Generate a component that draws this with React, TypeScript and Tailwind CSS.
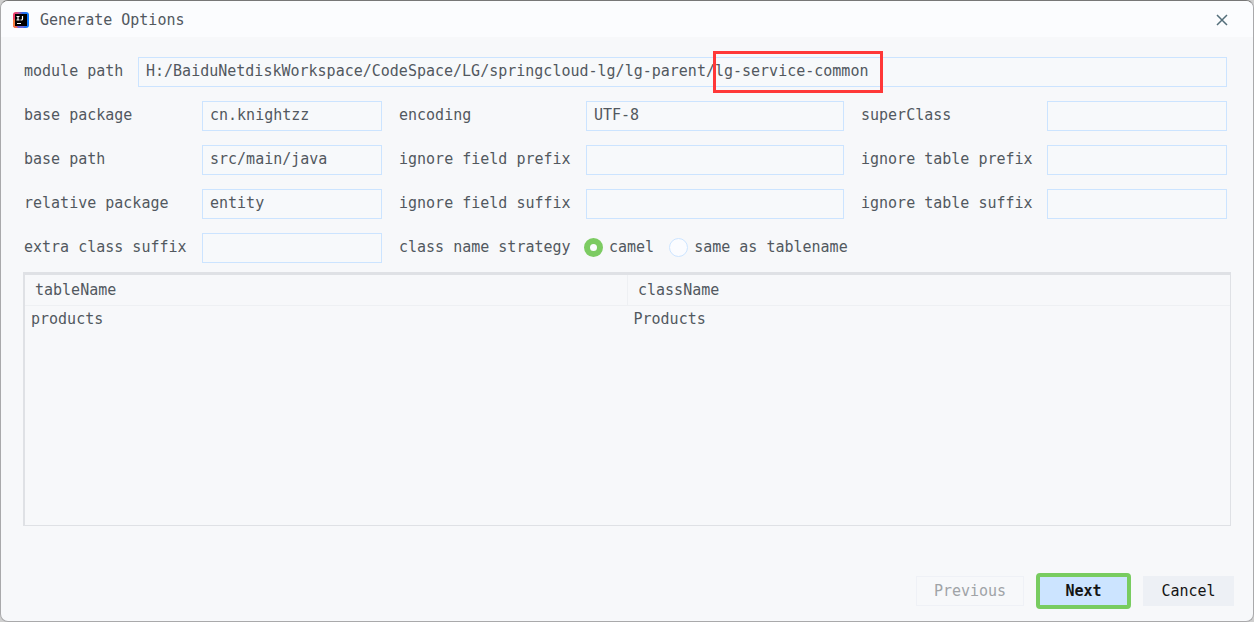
import { useState } from 'react';

const LABEL = 'flex items-center whitespace-nowrap pb-0.5';
const FIELD = 'h-[30px] w-full min-w-0 border border-[#cce4ff] bg-[#f7f9fb] px-[7px] pb-0.5 outline-none';

interface FieldProps {
  id: string;
  label: string;
  value?: string;
  first?: boolean;
}

function Field({ id, label, value = '', first = false }: FieldProps) {
  return (
    <>
      <label htmlFor={id} className={`${LABEL} ${first ? 'pl-px' : 'pl-[17px]'}`}>
        {label}
      </label>
      <input id={id} type="text" defaultValue={value} className={FIELD} />
    </>
  );
}

function IdeaLogo() {
  return (
    <svg className="size-4" viewBox="0 0 16 16" aria-hidden="true">
      <defs>
        <linearGradient id="idea" x1="0" y1="0.5" x2="1" y2="0.5">
          <stop offset="0" stopColor="#f8355a" />
          <stop offset="0.3" stopColor="#d0508c" />
          <stop offset="0.6" stopColor="#2f6bea" />
          <stop offset="1" stopColor="#0a7cff" />
        </linearGradient>
      </defs>
      <rect width="16" height="16" rx="3" fill="url(#idea)" />
      <path d="M0 8 L2 7 V14 L5 16 H3 Q0 16 0 13 Z" fill="#f57a3c" />
      <path d="M4 14 H12 L10 16 H5 Z" fill="#6a66d8" />
      <rect x="2" y="2" width="12" height="12" fill="#000" />
      <path
        d="M3.5 4.5 H6.5 M5 4.5 V8 M3.5 8 H6.5 M9.5 4 V7 Q9.5 8 8.5 8 H7.5"
        stroke="#fff"
        strokeWidth="1.2"
        fill="none"
      />
      <path d="M4 11.5 H8" stroke="#fff" strokeWidth="1.2" />
    </svg>
  );
}

export default function App() {
  const [strategy, setStrategy] = useState('camel');

  return (
    <div className="flex min-h-screen flex-col bg-[#cfcfcf] font-['DejaVu_Sans_Mono',monospace] text-[15px] leading-5 text-[#52585f]">
      <div className="flex flex-1 flex-col overflow-hidden rounded-lg border border-[#a9a9ab] border-t-[#777] bg-[#f7f8fa]">
        {/* Title bar */}
        <header className="flex h-9 items-center gap-[11px] bg-[#fbfcfe] pt-0.5 pr-[25px] pl-3">
          <IdeaLogo />
          <h1 className="flex-1">Generate Options</h1>
          <button type="button" aria-label="Close" className="text-[#546e7a]">
            <svg className="size-3" viewBox="0 0 12 12" fill="none" stroke="currentColor" strokeWidth="1.5">
              <path d="M1 1 L11 11 M11 1 L1 11" />
            </svg>
          </button>
        </header>

        <main className="flex flex-1 flex-col px-[22px] pt-5">
          <form className="flex flex-col gap-[14px] pr-1">
            <div className="grid grid-cols-[115px_1fr]">
              <label htmlFor="modulePath" className={`${LABEL} pl-px`}>module path</label>
              <div className="relative">
                <input
                  id="modulePath"
                  type="text"
                  defaultValue="H:/BaiduNetdiskWorkspace/CodeSpace/LG/springcloud-lg/lg-parent/lg-service-common"
                  className={FIELD}
                />
                {/* marker round the module name */}
                <div className="pointer-events-none absolute -top-1.5 left-[575px] h-[42px] w-[170px] border-3 border-[#ff3838]" />
              </div>
            </div>

            <div className="grid grid-cols-[179px_180px_204px_1fr_203px_180px] gap-y-[14px]">
              <Field id="basePackage" label="base package" value="cn.knightzz" first />
              <Field id="encoding" label="encoding" value="UTF-8" />
              <Field id="superClass" label="superClass" />

              <Field id="basePath" label="base path" value="src/main/java" first />
              <Field id="fieldPrefix" label="ignore field prefix" />
              <Field id="tablePrefix" label="ignore table prefix" />

              <Field id="relativePackage" label="relative package" value="entity" first />
              <Field id="fieldSuffix" label="ignore field suffix" />
              <Field id="tableSuffix" label="ignore table suffix" />

              <Field id="classSuffix" label="extra class suffix" first />
              <span id="strategy" className={`${LABEL} pl-[17px]`}>class name strategy</span>
              <div
                role="radiogroup"
                aria-labelledby="strategy"
                className="col-span-3 -ml-0.5 flex items-center gap-[15px] pb-0.5"
              >
                {['camel', 'same as tablename'].map((name) => (
                  <label key={name} className="flex items-center gap-[6px] whitespace-nowrap">
                    <input
                      type="radio"
                      name="strategy"
                      checked={strategy === name}
                      onChange={() => setStrategy(name)}
                      className="size-[19px] appearance-none rounded-full border border-[#cce4ff] bg-[#fbfcff] checked:border-6 checked:border-[#7ccb62]"
                    />
                    {name}
                  </label>
                ))}
              </div>
            </div>
          </form>

          {/* Table list */}
          <div className="mt-[9px] flex-1 border border-t-3 border-l-2 border-[#dfe1e5]">
            <table className="w-full table-fixed border-collapse text-left">
              <thead>
                <tr className="h-[30px] border-b border-[#eef0f3]">
                  <th className="border-r border-[#eef0f3] px-[10px] font-normal">tableName</th>
                  <th className="px-[10px] font-normal">className</th>
                </tr>
              </thead>
              <tbody>
                <tr className="h-7">
                  <td className="px-[6px]">products</td>
                  <td className="px-[6px]">Products</td>
                </tr>
              </tbody>
            </table>
          </div>
        </main>

        <footer className="flex items-center justify-end gap-3 px-[19px] pt-[47px] pb-3 text-[#141414]">
          <button type="button" disabled className="h-[30px] w-[108px] border border-[#eff1f6] text-[#a0a3a7]">
            Previous
          </button>
          <button type="button" className="h-9 w-[95px] rounded-sm border-4 border-[#78cc60] bg-[#cce4ff] font-bold">
            Next
          </button>
          <button type="button" className="h-[30px] w-[91px] bg-[#edf0f5]">
            Cancel
          </button>
        </footer>
      </div>
    </div>
  );
}
